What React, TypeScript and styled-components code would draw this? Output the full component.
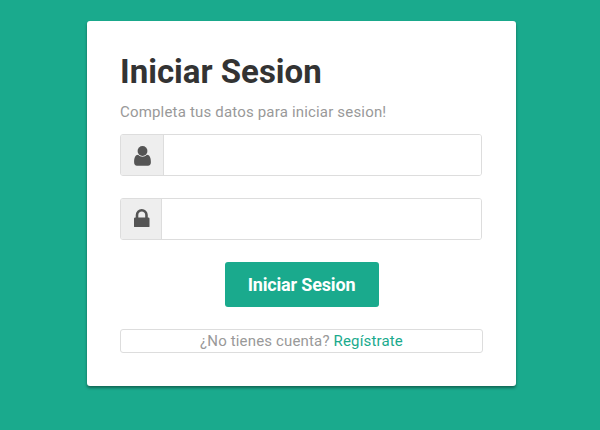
import React from "react";
import styled, { createGlobalStyle } from "styled-components";

const GlobalStyle = createGlobalStyle`
  * { box-sizing: border-box; }
  body { margin: 0; background: #1aaa8d; font-family: Roboto, sans-serif; }
`;

const Page = styled.main`
  height: 430px;
  padding: 21px 84px 0 87px;
  background: #1aaa8d;
`;

const Card = styled.form`
  height: 365px;
  padding: 30px 33px 0;
  display: flex;
  flex-direction: column;
  background: #fff;
  border-radius: 3px;
  box-shadow: 0 2px 3px rgba(0, 0, 0, 0.4);
`;

const Title = styled.h1`
  margin: 0;
  font-size: 33px;
  line-height: 42px;
  font-weight: 700;
  color: #333;
`;

const Hint = styled.p`
  margin: 9px 0 11px;
  font-size: 15px;
  line-height: 21px;
  letter-spacing: 0.18px;
  color: #999;
`;

const Field = styled.label`
  display: flex;
  width: 362px;
  height: 42px;
  margin-bottom: 22px;
  border: 1px solid #ddd;
  border-radius: 3px;
  overflow: hidden;
`;

const Addon = styled.span<{ $width: number; $top: number }>`
  flex: 0 0 ${(p) => p.$width}px;
  display: flex;
  align-items: flex-start;
  padding: ${(p) => p.$top}px 0 0 13px;
  background: #eee;
  border-right: 1px solid #ddd;
  color: #555;
`;

const Input = styled.input`
  flex: 1;
  min-width: 0;
  border: 0;
  outline: 0;
  padding: 0 12px;
  font: 15px Roboto, sans-serif;
`;

const Submit = styled.button`
  align-self: center;
  width: 154px;
  height: 45px;
  padding: 0;
  border: 0;
  border-radius: 3px;
  background: #1aaa8d;
  color: #fff;
  font: 700 18px Roboto, sans-serif;
  letter-spacing: -0.17px;
`;

const Register = styled.div`
  height: 24px;
  margin-top: 22px;
  border: 1px solid #ddd;
  border-radius: 3px;
  text-align: center;
  font-size: 15px;
  line-height: 22px;
  letter-spacing: 0.16px;
  color: #999;
`;

const Link = styled.a`
  color: #1aaa8d;
  text-decoration: none;
`;

const UserIcon = () => (
  <svg width="17" height="20" viewBox="0 0 17 20" fill="currentColor">
    <circle cx="8.500" cy="5" r="4.900" />
    <path d="M4.100 8.700C5.200 10 6.800 10.700 8.500 10.700S11.800 10 12.900 8.700C15.800 8.800 16.900 12 16.900 16.300C16.900 18.500 15.800 19.700 14 19.700H3C1.200 19.700 0.100 18.500 0.100 16.300C0.100 12 1.200 8.800 4.100 8.700Z" />
  </svg>
);

const LockIcon = () => (
  <svg width="15.500" height="18.500" viewBox="0 0 1152 1408" preserveAspectRatio="none" fill="currentColor">
    <path d="M320 640h512v-192q0-106-75-181t-181-75-181 75-75 181v192zM1152 736v576q0 40-28 68t-68 28h-960q-40 0-68-28t-28-68v-576q0-40 28-68t68-28h32v-192q0-184 132-316t316-132 316 132 132 316v192h32q40 0 68 28t28 68z" />
  </svg>
);

export default function App() {
  return (
    <Page>
      <GlobalStyle />
      <Card>
        <Title>Iniciar Sesion</Title>
        <Hint>Completa tus datos para iniciar sesion!</Hint>
        <Field>
          <Addon $width={43} $top={11}><UserIcon /></Addon>
          <Input type="text" />
        </Field>
        <Field>
          <Addon $width={41} $top={9.5}><LockIcon /></Addon>
          <Input type="password" />
        </Field>
        <Submit type="button">Iniciar Sesion</Submit>
        <Register>¿No tienes cuenta? <Link>Regístrate</Link></Register>
      </Card>
    </Page>
  );
}
